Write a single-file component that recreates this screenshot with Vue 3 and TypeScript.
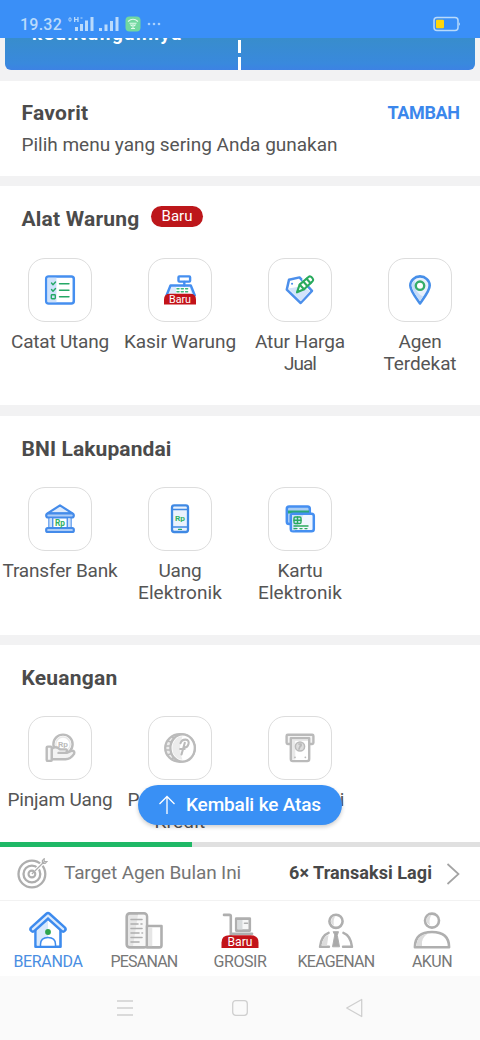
<script setup lang="ts">
interface Label { text: string; width: number }
interface Tile { icon: string; lines: Label[] }
interface Group { title: string; width: number; badge?: boolean; tiles: Tile[] }

const groups: Group[] = [
  {
    title: 'Alat Warung', width: 118, badge: true,
    tiles: [
      { icon: 'list', lines: [{ text: 'Catat Utang', width: 98 }] },
      { icon: 'register', lines: [{ text: 'Kasir Warung', width: 112 }] },
      { icon: 'tag', lines: [{ text: 'Atur Harga', width: 90 }, { text: 'Jual', width: 32 }] },
      { icon: 'pin', lines: [{ text: 'Agen', width: 43 }, { text: 'Terdekat', width: 73 }] },
    ],
  },
  {
    title: 'BNI Lakupandai', width: 150,
    tiles: [
      { icon: 'bank', lines: [{ text: 'Transfer Bank', width: 115 }] },
      { icon: 'phone', lines: [{ text: 'Uang', width: 43 }, { text: 'Elektronik', width: 84 }] },
      { icon: 'card', lines: [{ text: 'Kartu', width: 45 }, { text: 'Elektronik', width: 84 }] },
    ],
  },
  {
    title: 'Keuangan', width: 96,
    tiles: [
      { icon: 'loan', lines: [{ text: 'Pinjam Uang', width: 105 }] },
      { icon: 'coin', lines: [{ text: 'Pembayaran', width: 105 }, { text: 'Kredit', width: 51 }] },
      { icon: 'cash', lines: [{ text: 'Tarik Tunai', width: 88 }] },
    ],
  },
]

const tabs = [
  { icon: 'home', text: 'BERANDA', width: 69 },
  { icon: 'orders', text: 'PESANAN', width: 67 },
  { icon: 'cart', text: 'GROSIR', width: 53 },
  { icon: 'agent', text: 'KEAGENAN', width: 77 },
  { icon: 'account', text: 'AKUN', width: 40 },
]

// Tracks a label so that it spans the given width in pixels.
const vFit = {
  mounted(el: HTMLElement, binding: { value: number }) {
    const n = (el.textContent ?? '').length
    const natural = el.getBoundingClientRect().width
    el.style.letterSpacing = `${(binding.value - natural) / n}px`
  },
}
</script>

<template>
  <div class="screen">
    <header class="status">
      <span v-fit="42" class="clock">19.32</span>
      <svg class="signal" width="54" height="18" viewBox="0 0 54 18">
        <g fill="#b9dafc">
          <rect x="9" y="12" width="3" height="4" /><rect x="14" y="9" width="3" height="7" />
          <rect x="19" y="5.5" width="3" height="10.5" /><rect x="24.5" y="2" width="3" height="14" />
          <rect x="33" y="13" width="3" height="3" /><rect x="38.5" y="9.5" width="3" height="6.5" />
          <rect x="44" y="6" width="3" height="10" /><rect x="49.5" y="2" width="3" height="14" />
          <ellipse cx="4" cy="4.5" rx="1.1" ry="1.8" fill="none" stroke="#b9dafc" />
          <path d="M8 2h1.3v5H8zM11.3 2h1.3v5h-1.3zM9 4h3v1H9zM14.5 2.5h2v1h-2z" />
        </g>
      </svg>
      <svg class="app" width="16" height="16" viewBox="0 0 16 16">
        <rect x=".5" y=".5" width="15" height="15" rx="4" fill="#72d8a0" />
        <path d="M3 5.5Q8 1 13 5.5M4.5 7.2h7M8 8v4M5.5 8.5 7 10M10.5 8.5 9 10M6 12.5h4" fill="none" stroke="#e0faec" stroke-width="1.1" />
      </svg>
      <svg width="14" height="4" viewBox="0 0 14 4" fill="#a9d0fc"><circle cx="2" cy="2" r="1.3" /><circle cx="7" cy="2" r="1.3" /><circle cx="12" cy="2" r="1.3" /></svg>
      <svg class="battery" width="28" height="16" viewBox="0 0 28 16">
        <rect x="1" y="1.5" width="24" height="13" rx="3" fill="none" stroke="#b8dafb" stroke-width="1.5" />
        <path d="M26 6.2q2 1.8 0 3.6z" fill="#b8dafb" /><rect x="3" y="3.7" width="8" height="8.6" rx="1" fill="#ffd60a" />
      </svg>
    </header>

    <main class="content">
      <div class="banner">
        <span v-fit="151" class="banner-text">keuntungannya</span>
        <span class="divider"></span>
      </div>

      <section class="favorite">
        <div class="row">
          <h2 v-fit="67">Favorit</h2>
          <a v-fit="72" class="add">TAMBAH</a>
        </div>
        <p><span v-fit="316">Pilih menu yang sering Anda gunakan</span></p>
      </section>

      <section v-for="g in groups" :key="g.title" class="group">
        <div class="heading">
          <h2 v-fit="g.width">{{ g.title }}</h2>
          <span v-if="g.badge" class="badge"><span v-fit="31">Baru</span></span>
        </div>
        <div class="tiles">
          <div v-for="t in g.tiles" :key="t.icon" class="tile">
            <div class="box">
              <svg width="36" height="36" viewBox="0 0 36 36" fill="none" stroke-linejoin="round" stroke-linecap="round">
                <g v-if="t.icon === 'list'" stroke="#458ff0" stroke-width="2.5">
                  <rect x="4.2" y="4.4" width="27.6" height="27" rx="2.5" fill="#fff" />
                  <path d="M5.5 5.7h9v24.5h-9z" fill="#cfe2fb" stroke="none" />
                  <g stroke="#25a866" stroke-width="1.4"><path d="m9.5 11 1.5 1.8L13.5 10M9.5 17.5l1.5 1.8 2.5-2.8M17.5 11.8H27M17.5 18.3H27M17.5 24.8H27" /><rect x="9.3" y="22.8" width="4" height="4" rx=".7" /></g>
                </g>
                <g v-else-if="t.icon === 'register'" stroke="#458ff0" stroke-width="2.4">
                  <path d="M8.5 13.5h20.3l4 10H4.5z" fill="#deebfc" /><rect x="16.5" y="4.4" width="11.6" height="5.2" rx=".8" fill="#fff" /><path d="M22.3 10v3.5" />
                  <path d="M14 15.3h13.5l2 6.5H14z" fill="#fff" stroke="none" />
                  <path d="M15 16.8h2M19.3 16.8h2M23.6 16.8h2M15 19.8h2M19.3 19.8h2M23.6 19.8h2" stroke="#3cb878" stroke-width="1.5" />
                  <path d="M2 32.5v-5Q2 21.8 8 21.8h20q6 0 6 5.7v5z" fill="#c31319" stroke="none" />
                  <text x="18" y="31.2" class="mini" textLength="22" lengthAdjust="spacingAndGlyphs">Baru</text>
                </g>
                <g v-else-if="t.icon === 'tag'" stroke="#4c8feb" stroke-width="2.5">
                  <path d="M7 7.8 17.5 5.4 30 18.8 18.7 31 4.8 17.6z" fill="#fff" /><path d="m6.3 16.5 12.2-2.1 9.8 4.6-9.6 10.2z" fill="#d2e3fb" stroke="none" /><path d="M10 11.7h.1" stroke-width="2" />
                  <path d="M21.5 6.5 26.5 13" stroke="#fff" stroke-width="4" stroke-linecap="butt" />
                  <g stroke="#29aa5d" stroke-width="2.1"><path d="m15 20.3 2.6-7.7L26.5 5q1.8-1.5 3.7.8t.1 3.7l-8.2 7.8z" fill="#fff" /><path d="m17.8 12.7 4.2 4.6M24.6 6.7l4 4.5M21.5 9.8l3.6 4" /></g>
                </g>
                <g v-else-if="t.icon === 'pin'" stroke="#478fe9" stroke-width="2.6">
                  <path d="M18 31.4C15.3 27.5 8.3 19.3 8.3 13.6a9.7 9.2 0 0 1 19.4 0C27.7 19.3 20.7 27.5 18 31.4z" fill="#e8f1fd" /><path d="M9.6 12.5c0 5.7 5.6 12.5 8.4 16.8l3-5.1c-5-1.5-8.9-7.2-8.1-16.5z" fill="#c5dcf8" stroke="none" /><circle cx="18" cy="13.7" r="4.2" stroke="#35ad69" stroke-width="2.4" fill="#fff" />
                </g>
                <g v-else-if="t.icon === 'bank'" stroke="#448bea" stroke-width="2.2">
                  <path d="M5.5 12.4 18 4.4l12.5 8z" fill="#deebfc" /><rect x="4.2" y="12.5" width="27.6" height="4" rx="2" fill="#aecdf7" />
                  <path d="M7 17.5v9.2M10.7 17.5v9.2M25.3 17.5v9.2M29 17.5v9.2" stroke-width="1.4" /><path d="M7.5 17.5h2.6v9H7.5zM25.9 17.5h2.6v9h-2.6z" fill="#cfe1fa" stroke="none" />
                  <rect x="4.2" y="27" width="27.6" height="4" rx="1.6" fill="#aecdf7" /><text x="18" y="24.7" class="rp" textLength="10" lengthAdjust="spacingAndGlyphs">Rp</text>
                </g>
                <g v-else-if="t.icon === 'phone'" stroke="#3f89e4" stroke-width="2.3">
                  <rect x="10" y="4.4" width="16" height="26.6" rx="2.2" fill="#eaf2fc" /><path d="M10.5 8.4h15M10.5 26h15" stroke-width="1.5" /><path d="M16.5 28.4h3" stroke="#27aa68" stroke-width="1.2" /><text x="18" y="20" class="rp small" textLength="10" lengthAdjust="spacingAndGlyphs">Rp</text>
                </g>
                <g v-else-if="t.icon === 'card'" stroke="#458ff1" stroke-width="2.5">
                  <rect x="4.8" y="5.6" width="23" height="17.5" rx="2.3" fill="#a9cdf5" /><path d="M6 9.5h21v3H6z" fill="#28a67a" stroke="none" />
                  <rect x="8.8" y="12.7" width="23" height="17.6" rx="2.3" fill="#f0f6ff" /><path d="M10 14h11.5L13 29.2h-3z" fill="#cfe2fa" stroke="none" />
                  <g stroke="#29aa5e" stroke-width="1.4"><rect x="12" y="16" width="7" height="6.5" rx="1.2" /><path d="M12 19.2h7M15.5 16v6.5M12 25h14M12 27.6h3M18 27.6h2M23 27.6h2" /></g>
                </g>
                <g v-else-if="t.icon === 'loan'" stroke="#bcbcbc" stroke-width="2.4">
                  <circle cx="21" cy="14.2" r="9.6" fill="#fff" /><circle cx="21" cy="14.2" r="7.2" stroke="#e9e9e9" stroke-width="1.5" /><text x="21" y="16.8" class="rp small muted" textLength="10" lengthAdjust="spacingAndGlyphs">Rp</text>
                  <path d="M9.5 19q4.5-3.5 8.5.4h6.2q2 2.1-.6 3.5h-7.1 8.2l5.2-2.2q3.2 0 2.2 3.1-3.8 5.6-8.9 5.4H9.5z" fill="#f3f3f3" /><rect x="4.7" y="16.6" width="5" height="14.3" rx="1" fill="#f6f6f6" />
                </g>
                <g v-else-if="t.icon === 'coin'" stroke="#bbb" stroke-width="2.3">
                  <ellipse cx="18" cy="18" rx="14.8" ry="13.8" fill="#ededed" /><path d="m10 7 3 2M6 11l4 1.5M3.5 16h5M3.5 20h5M5.5 25l4-1.5M9.5 29l3-2" stroke-width="1.7" />
                  <ellipse cx="20.6" cy="18" rx="12.2" ry="13.6" fill="#fff" /><path d="M20.5 6.2a10.2 11.8 0 0 0 0 23.6q-5-12 0-23.6" fill="#ececec" stroke="none" />
                  <path d="M18.5 13.2q1.2-3.7 5-3.6 4 .5 3 4.5-.9 3.8-4.6 3.4M22.8 12.8 19.5 24.5M18.2 19h4.4" stroke-width="2.1" />
                </g>
                <g v-else stroke="#bababa" stroke-width="2.4">
                  <path d="M8 14H5.8q-1.2 0-1.2-1.2V6q0-1.2 1.2-1.2h24.4q1.2 0 1.2 1.2v6.8q0 1.2-1.2 1.2H28" fill="#f3f3f3" /><path d="M8.8 8.2h18.4v20.9q0 2-2 2H10.8q-2 0-2-2z" fill="#fff" />
                  <path d="M10 9.5h16v1.5H10zM10 11h3.3v18.5H10z" fill="#e9e9e9" stroke="none" /><circle cx="18" cy="16.5" r="4.6" fill="#ddd" stroke-width="1.5" /><path d="m17 19 2-5M17 14q4 0 1 3M12.9 27.3h.1M23.3 27.3h.1" stroke-width="1.7" />
                </g>
              </svg>
            </div>
            <div v-for="l in t.lines" :key="l.text" class="label"><span v-fit="l.width">{{ l.text }}</span></div>
          </div>
        </div>
      </section>

      <button class="to-top">
        <svg width="18" height="20" viewBox="0 0 18 20" fill="none" stroke="#fff" stroke-width="1.3"><path d="M9 19V1.5M1.5 9 9 1.5 16.5 9" /></svg>
        <span v-fit="135">Kembali ke Atas</span>
      </button>
    </main>

    <div class="progress"><div class="bar"></div></div>
    <div class="target">
      <svg width="32" height="32" viewBox="0 0 32 32" fill="none" stroke="#aeaeae">
        <circle cx="15.9" cy="16" r="13.4" stroke-width="2.3" /><circle cx="15.9" cy="16" r="8.4" stroke-width="2.3" /><circle cx="15.9" cy="16" r="3.4" stroke-width="2.1" />
        <path d="M18.9 13 27.4 4.500" stroke="#fff" stroke-width="3.5" /><path d="M15.900 16 28.900 3M26.400 5.300V2.500L28.200.7v2.800H31l-1.800 1.800z" stroke-width="1.2" />
      </svg>
      <span v-fit="177" class="target-name">Target Agen Bulan Ini</span>
      <span v-fit="143" class="target-left">6× Transaksi Lagi</span>
      <svg class="chevron" width="14" height="22" viewBox="0 0 14 22" fill="none" stroke="#a3a3a3" stroke-width="1.7"><path d="m1.5 1 11 10-11 10" /></svg>
    </div>

    <nav class="tabs">
      <div v-for="(t, i) in tabs" :key="t.icon" class="tab" :class="{ active: i === 0 }">
        <svg width="40" height="40" viewBox="0 0 40 40" fill="none" stroke="#afafaf" stroke-width="2.6" stroke-linejoin="round" stroke-linecap="round">
          <g v-if="t.icon === 'home'" stroke="#3d8bee">
            <path d="M7.5 19 20 8l12.5 11v17.8h-25z" fill="#fff" /><path d="M8.8 19 20 9v26.5H8.8z" fill="#d9e9fc" stroke="none" />
            <path d="M4.9 19.2 20 5.5l15.1 13.7" stroke-width="7.2" /><path d="M4.9 19.2 20 5.5l15.1 13.7" stroke="#dbeafd" stroke-width="2.3" />
            <circle cx="20" cy="22" r="2.9" fill="#2da54e" stroke="none" /><path d="M12.5 36.6v-2.3q0-6.8 7.5-6.8t7.5 6.8v2.3z" fill="#fff" stroke-width="1.5" />
          </g>
          <g v-else-if="t.icon === 'orders'">
            <rect x="2.7" y="3.4" width="20.3" height="34" rx="3" fill="#e6e6e6" /><path d="M14 4.7h6.5q1.2 0 1.2 2v29.4H9z" fill="#f7f7f7" stroke="none" />
            <path d="M23 16h14.5v19.2q0 2.2-2.2 2.2H23z" fill="#fff" /><path d="M24.3 17.3h4v18.8h-4z" fill="#e6e6e6" stroke="none" /><path d="M7 9.5h11M7 14h7M17 14h1M7 18.5h11M7 23h8M18 23h.5M7 27.5h11M7 32h8" stroke-width="1.6" />
          </g>
          <g v-else-if="t.icon === 'cart'">
            <path d="M4 4.9h5.3q1.5 0 1.5 1.5V28" /><rect x="16.2" y="8.6" width="13.6" height="12" fill="#f7f7f7" /><path d="M17.5 10h5v9.4h-5z" fill="#d8dbdc" stroke="none" /><path d="M24.5 13.3h3" stroke-width="1.6" /><path d="M12 23.8h20" stroke-width="2.6" />
            <path d="M1.5 38V32.5q0-7.2 8-7.2h21q8 0 8 7.2V38z" fill="#c31319" stroke="none" /><text x="20" y="35.8" class="mini tab-mini" textLength="25" lengthAdjust="spacingAndGlyphs">Baru</text>
          </g>
          <g v-else-if="t.icon === 'agent'">
            <circle cx="20" cy="11.3" r="6.6" fill="#fff" /><path d="M17 6.4q-4.6 6 1.2 9.6-1.5-5 .8-9.6z" fill="#ddd" stroke="none" />
            <path d="M12.6 22.8Q5.3 25.5 4 36.8h9M27.4 22.8Q34.7 25.5 36 36.8h-9" stroke-width="2.4" /><path d="M12.5 25Q6.4 27.5 5.6 35.6H11z" fill="#ddd" stroke="none" /><path d="M17.5 21.7h5l-1.2 3.6 2.2 11.5h-7l2.2-11.5z" fill="#aaa" stroke-width="1" />
          </g>
          <g v-else>
            <circle cx="20" cy="10.6" r="7" fill="#fff" /><path d="M17 4.9q-6 6.2 1.2 10.7-1.7-5 1-10.7z" fill="#dedede" stroke="none" /><path d="M2.9 37.3q0-15.3 17.1-15.3t17.1 15.3z" fill="#fff" /><path d="M4.5 36q0-10.6 11.2-12.4-7 5-5.7 12.4z" fill="#dcdcdc" stroke="none" />
          </g>
        </svg>
        <span v-fit="t.width">{{ t.text }}</span>
      </div>
    </nav>

    <footer class="system">
      <svg width="18" height="18" viewBox="0 0 18 18"><path d="M1 2h16M1 9h16M1 16h16" /></svg>
      <svg width="18" height="18" viewBox="0 0 18 18"><rect x="1.7" y="1.7" width="14.6" height="14.6" rx="3" /></svg>
      <svg width="18" height="20" viewBox="0 0 18 20"><path d="M.7 10 15.7 1.5v17z" /></svg>
    </footer>
  </div>
</template>

<style>
html, body { margin: 0; background: #fff; }
</style>

<style scoped>
.screen { width: 480px; height: 1040px; display: flex; flex-direction: column; overflow: hidden; background: #fff; font-family: Roboto, "Open Sans", sans-serif; color: #555; }
svg { display: block; flex: none; }
h2, p { margin: 0; }
span, h2, a { white-space: nowrap; }
.status { height: 38px; flex: none; box-sizing: border-box; padding: 10px 19px 0 20px; display: flex; align-items: center; background: #3a8ff7; }
.clock { font-size: 16px; font-weight: 500; color: #b9dafc; }
.signal { margin-left: 4px; }
.app { margin: 0 6px 0 5px; }
.battery { margin-left: auto; }
.content { position: relative; height: 804px; flex: none; overflow: hidden; background: #f2f2f3; display: flex; flex-direction: column; gap: 10px; }
.banner { height: 32px; margin: 0 5px 1px; flex: none; border-radius: 0 0 6px 6px; background: linear-gradient(#388dcc, #3989dd 80%, #3d82e4); position: relative; overflow: hidden; }
.banner-text { position: absolute; left: 27px; top: -15px; font-size: 19px; line-height: 22px; font-weight: 700; color: #fff; }
.divider { position: absolute; left: 233px; top: 2px; width: 3px; height: 30px; background: repeating-linear-gradient(#fff 0 13px, transparent 13px 17px); }
.favorite { height: 95px; flex: none; box-sizing: border-box; padding: 20px 20.5px 0 21.5px; background: #fff; }
.row { display: flex; justify-content: space-between; align-items: center; height: 24px; }
h2 { font-size: 21px; line-height: 24px; font-weight: 700; color: #4b4b4b; }
.add { font-size: 18px; line-height: 22px; font-weight: 700; color: #3b87ec; }
p { margin-top: 8px; font-size: 19px; line-height: 24px; }
.group { height: 219px; flex: none; background: #fff; }
.group:nth-of-type(3) { margin-top: 1px; }
.heading { height: 71px; box-sizing: border-box; padding: 20.5px 0 0 21.5px; display: flex; align-items: flex-start; }
.group:nth-of-type(2) .heading { height: 72px; margin-bottom: -.5px; }
.badge { width: 52px; height: 21px; margin: -.5px 0 0 11.5px; border-radius: 11px; background: #bd171b; color: #fff; font-size: 15px; line-height: 21px; text-align: center; }
.tiles { display: grid; grid-template-columns: repeat(4, 120px); }
.tile { display: flex; flex-direction: column; align-items: center; }
.box { width: 64px; height: 64px; box-sizing: border-box; margin-bottom: 9px; border: 1px solid #ddd; border-radius: 17px; display: grid; place-items: center; }
.label { font-size: 19px; line-height: 22px; height: 22px; }
.mini { font-size: 11px; fill: #fff; stroke: none; text-anchor: middle; }
.tab-mini { font-size: 12px; }
.rp { font-size: 9px; font-weight: 700; fill: #30b163; stroke: none; text-anchor: middle; }
.rp.small { font-size: 8px; }
.rp.muted { fill: #bbb; }
.to-top { position: absolute; left: 138px; top: 747px; width: 204px; height: 40px; border: 0; border-radius: 20px; padding: 0 20px; background: #3990f5; box-shadow: 0 2px 4px #0003; color: #fff; display: flex; align-items: center; font: 500 19px Roboto, sans-serif; }
.to-top span { margin-left: 10px; line-height: 22px; margin-top: -1px; }
.progress { height: 5px; flex: none; background: #e0e0e0; }
.bar { width: 192px; height: 5px; background: #1fb866; }
.target { height: 54px; flex: none; box-sizing: border-box; border-bottom: 1px solid #f2f2f2; padding: 0 20px 0 16px; display: flex; align-items: center; }
.target-name { margin: -2px 0 0 16px; font-size: 19px; color: #757575; }
.target-left { margin: -2px 0 0 auto; font-size: 18px; font-weight: 700; color: #484848; }
.chevron { margin-left: 14px; }
.tabs { height: 75px; flex: none; box-sizing: border-box; padding-top: 9px; display: grid; grid-template-columns: repeat(5, 96px); }
.tab { display: flex; flex-direction: column; align-items: center; font-size: 16px; line-height: 20px; color: #777; }
.tab span { margin-top: 2px; }
.tab.active { color: #4a8ee2; }
.system { flex: 1; background: #fafafa; display: flex; justify-content: center; align-items: center; gap: 97px; }
.system svg { fill: none; stroke: #cfcfcf; stroke-width: 1.3; stroke-linejoin: round; }
</style>
